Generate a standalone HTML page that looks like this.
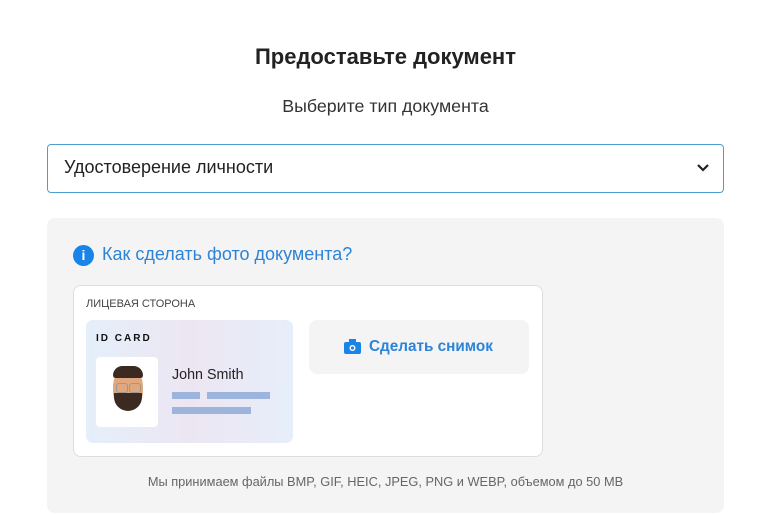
<!DOCTYPE html>
<html><head><meta charset="utf-8"><style>
body{margin:0;width:769px;height:515px;background:#fff;font-family:"Liberation Sans",sans-serif;position:relative;overflow:hidden}
.a{position:absolute}
</style></head><body>
<div class="a" style="left:0;width:771px;top:44px;text-align:center;font-size:22px;font-weight:bold;color:#222">Предоставьте документ</div>
<div class="a" style="left:0;width:771px;top:96px;text-align:center;font-size:17.8px;color:#333">Выберите тип документа</div>
<div class="a" style="left:47px;top:144px;width:675px;height:47px;border:1px solid #4a9fd0;border-radius:4px"></div>
<div class="a" style="left:64px;top:157px;font-size:18px;color:#222">Удостоверение личности</div>
<svg class="a" style="left:696px;top:163px" width="14" height="10"><path d="M2 2l5 5 5-5" stroke="#222" stroke-width="2.2" fill="none"/></svg>
<div class="a" style="left:47px;top:218px;width:677px;height:295px;background:#f4f4f4;border-radius:8px"></div>
<div class="a" style="left:73px;top:245px;width:21px;height:21px;border-radius:50%;background:#1a84e6;color:#fff;font-weight:bold;font-size:14px;text-align:center;line-height:21px">i</div>
<div class="a" style="left:102px;top:244px;font-size:18px;color:#2d83d6">Как сделать фото документа?</div>
<div class="a" style="left:73px;top:285px;width:468px;height:170px;background:#fff;border:1px solid #ddd;border-radius:8px"></div>
<div class="a" style="left:86px;top:298px;font-size:11px;color:#444">ЛИЦЕВАЯ СТОРОНА</div>
<div class="a" style="left:86px;top:320px;width:207px;height:123px;border-radius:7px;background:linear-gradient(90deg,#e4effa,#ece6f2,#e6eefa)"></div>
<div class="a" style="left:96px;top:333px;font-size:10px;font-weight:bold;letter-spacing:2px;color:#111">ID CARD</div>
<div class="a" style="left:96px;top:357px;width:62px;height:70px;background:#fff;border-radius:4px"></div>
<div class="a" style="left:113px;top:368px;width:30px;height:42px;border-radius:45%;background:#e2a77c"></div>
<div class="a" style="left:113px;top:366px;width:30px;height:12px;border-radius:14px 14px 4px 4px;background:#3b2a22"></div>
<div class="a" style="left:114px;top:393px;width:28px;height:18px;border-radius:0 0 14px 14px;background:#3a2a22"></div>
<div class="a" style="left:116px;top:383px;width:10px;height:8px;border:1.5px solid #999;border-radius:3px"></div>
<div class="a" style="left:129px;top:383px;width:10px;height:8px;border:1.5px solid #999;border-radius:3px"></div>
<div class="a" style="left:172px;top:367px;font-size:14.3px;color:#222">John Smith</div>
<div class="a" style="left:172px;top:392px;width:28px;height:7px;background:#9db5dc"></div>
<div class="a" style="left:207px;top:392px;width:63px;height:7px;background:#9db5dc"></div>
<div class="a" style="left:172px;top:407px;width:79px;height:7px;background:#9db5dc"></div>
<div class="a" style="left:309px;top:320px;width:220px;height:54px;background:#f4f4f4;border-radius:8px"></div>
<svg class="a" style="left:344px;top:339px" width="17" height="15"><rect x="0" y="3" width="17" height="12" rx="2" fill="#1a84e6"/><rect x="5" y="0" width="7" height="4" fill="#1a84e6"/><circle cx="8.5" cy="9" r="3" fill="#fff"/><circle cx="8.5" cy="9" r="1.6" fill="#1a84e6"/></svg>
<div class="a" style="left:369px;top:338px;font-size:15.3px;font-weight:bold;color:#2d83d6">Сделать снимок</div>
<div class="a" style="left:47px;width:677px;top:474px;text-align:center;font-size:12.8px;color:#666">Мы принимаем файлы BMP, GIF, HEIC, JPEG, PNG и WEBP, объемом до 50 MB</div>
</body></html>
